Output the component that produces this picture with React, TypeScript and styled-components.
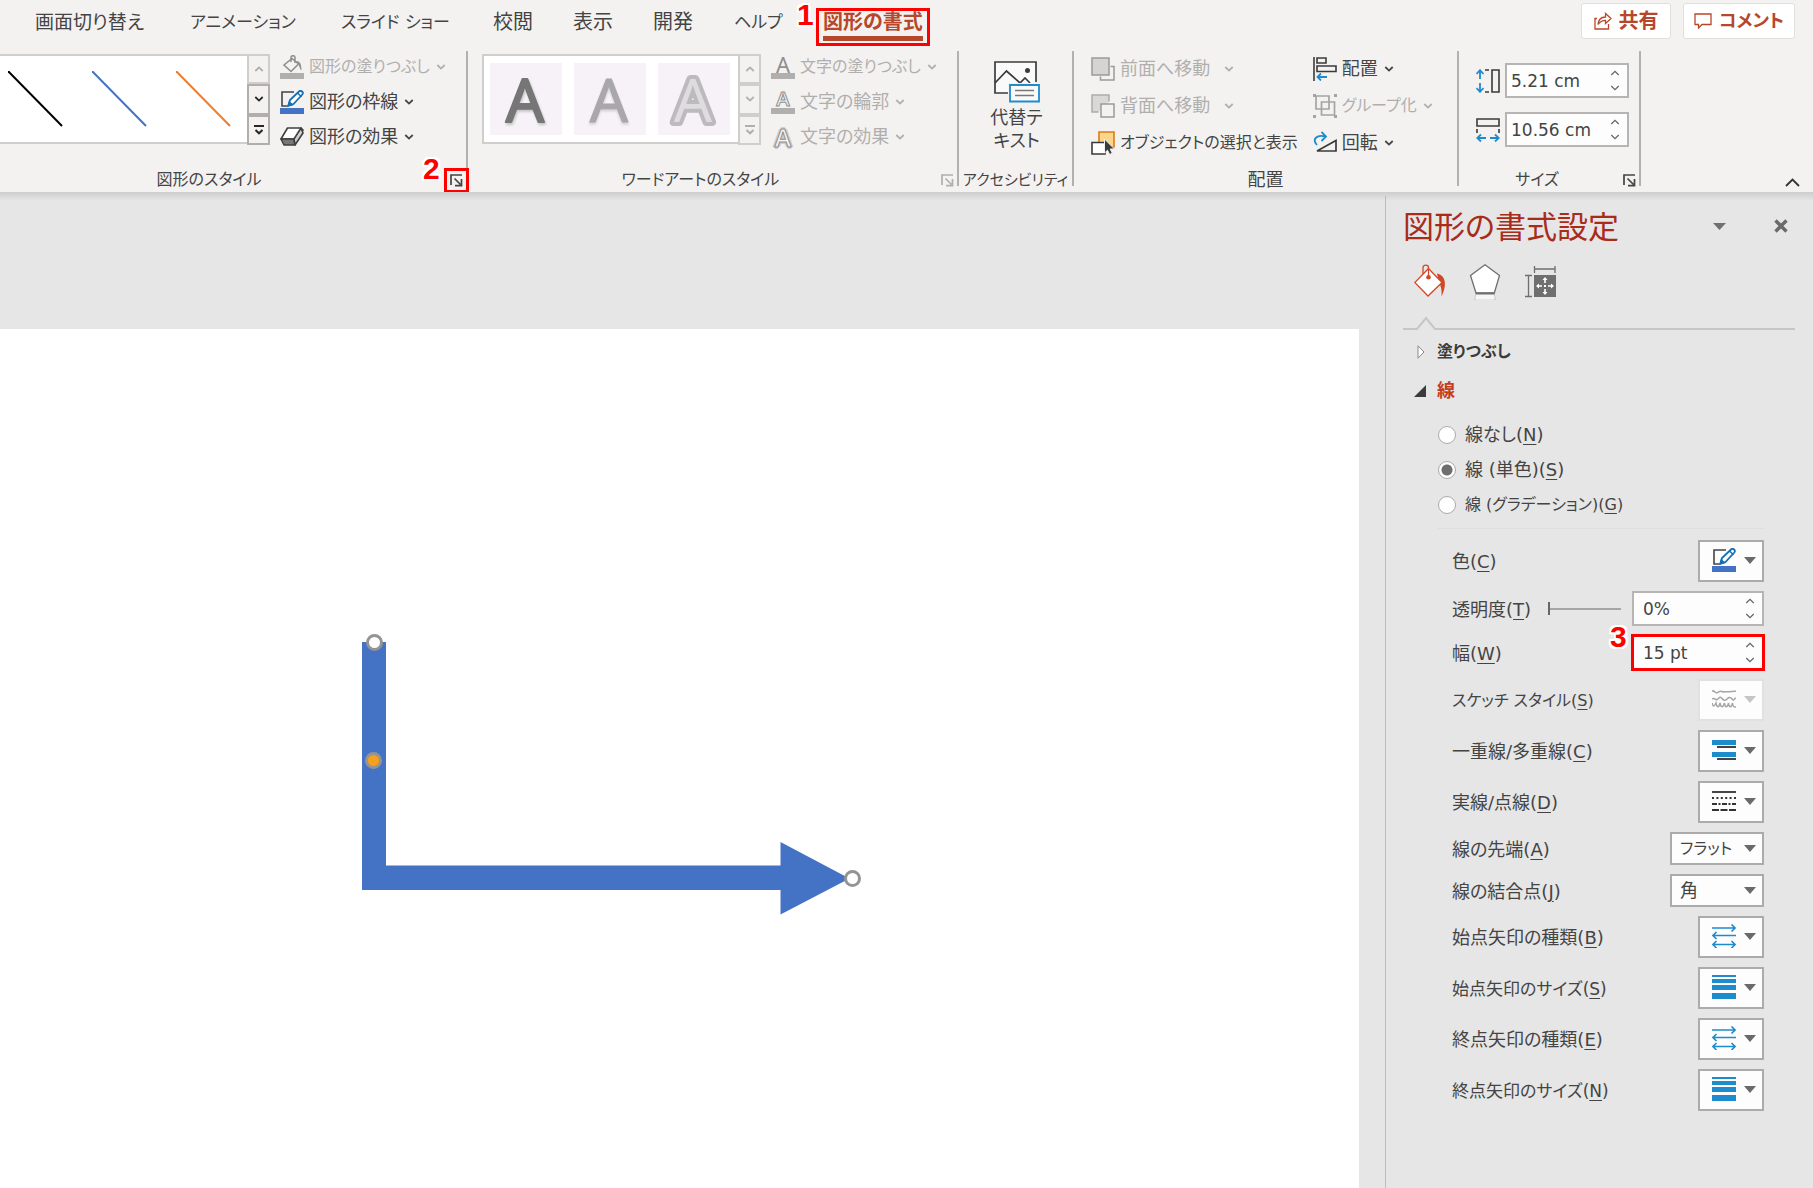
import React from "react";
import styled, { createGlobalStyle, css } from "styled-components";

const INK = "#444444";
const MUTED = "#b1afad";
const ACCENT = "#b7472a";
const BLUE = "#1e8bcd";
const SHAPE = "#4472c4";
const MARK = "#ff0000";

const GlobalStyle = createGlobalStyle`
  *, *::before, *::after { box-sizing: border-box; }
  body {
    margin: 0;
    background: #e6e6e6;
    color: ${INK};
    font-family: "DejaVu Sans", "Noto Sans CJK JP", sans-serif;
    font-size: 18px;
    line-height: 24px;
    font-feature-settings: "palt" 1;
  }
  button, input, select { font: inherit; color: inherit; font-feature-settings: inherit; margin: 0; }
  button { background: none; border: 0; padding: 0; cursor: pointer; }
  svg { display: block; flex: none; }
`;

const Page = styled.div`
  min-height: 100vh;
  display: flex;
  flex-direction: column;
`;

/* ---------- ribbon ---------- */

const Ribbon = styled.header`
  position: relative;
  background: #f3f2f1;
  &::after {
    content: "";
    position: absolute;
    z-index: 1;
    left: 0;
    right: 0;
    top: 100%;
    height: 9px;
    background: linear-gradient(#cdcdcd, #e6e6e6);
  }
`;

const TabBar = styled.div`
  display: flex;
  height: 49px;
  padding: 3px 18px 0 35px;
`;

const Tabs = styled.nav`
  display: flex;
  flex: 1;
`;

const TabSlot = styled.div<{ $width: number }>`
  width: ${(p) => p.$width}px;
  flex: none;
`;

const Tab = styled.button<{ $active?: boolean; $size?: number }>`
  position: relative;
  height: 38px;
  font-size: ${(p) => p.$size ?? 20}px;
  white-space: nowrap;
  ${(p) =>
    p.$active &&
    css`
      color: ${ACCENT};
      font-weight: 700;
      border-bottom: 5px solid ${ACCENT};
      padding-top: 5px;
    `}
`;

const TabMark = styled.span`
  position: absolute;
  inset: 5px -7px -10px;
  border: 3px solid ${MARK};
`;

const StepNumber = styled.span<{ $left: number; $top: number }>`
  position: absolute;
  z-index: 2;
  left: ${(p) => p.$left}px;
  top: ${(p) => p.$top}px;
  color: ${MARK};
  font: 700 30px/30px "Liberation Sans", Arial, sans-serif;
  text-shadow: 2px 0 #fff, -2px 0 #fff, 0 2px #fff, 0 -2px #fff, 2px 2px #fff, -2px -2px #fff, 2px -2px #fff,
    -2px 2px #fff;
`;

const HeaderActions = styled.div`
  display: flex;
  gap: 12px;
`;

const HeaderButton = styled.button<{ $width: number; $size?: number }>`
  display: flex;
  align-items: center;
  justify-content: center;
  gap: 7px;
  width: ${(p) => p.$width}px;
  height: 36px;
  background: #fff;
  border: 1px solid #e1dfdd;
  border-radius: 3px;
  color: ${ACCENT};
  font-size: ${(p) => p.$size ?? 20}px;
  font-weight: 700;
`;

const Groups = styled.div`
  display: flex;
`;

const Group = styled.section<{ $width: number }>`
  width: ${(p) => p.$width}px;
  flex: none;
  display: flex;
  flex-direction: column;
`;

const GroupBody = styled.div<{ $top?: number; $left?: number; $gap?: number }>`
  display: flex;
  height: 117px;
  padding: ${(p) => p.$top ?? 0}px 0 0 ${(p) => p.$left ?? 0}px;
  gap: ${(p) => p.$gap ?? 10}px;
`;

const GroupFooter = styled.div`
  display: flex;
  height: 26px;
  align-items: center;
`;

const GroupName = styled.h2<{ $size?: number; $end?: number }>`
  flex: 1;
  margin: 0;
  padding: 2px ${(p) => p.$end ?? 0}px 0 0;
  font-size: ${(p) => p.$size ?? 16}px;
  font-weight: 400;
  text-align: center;
  white-space: nowrap;
`;

const Launcher = styled.button<{ $off?: boolean }>`
  position: relative;
  display: flex;
  align-items: center;
  justify-content: flex-end;
  width: 24px;
  height: 26px;
  padding: 3px 3px 0 0;
  color: ${(p) => (p.$off ? MUTED : INK)};
`;

const LauncherMark = styled.span`
  position: absolute;
  left: 2px;
  top: 2px;
  width: 25px;
  height: 25px;
  border: 3px solid ${MARK};
`;

const Divider = styled.div`
  width: 2px;
  height: 135px;
  margin-top: 2px;
  background: #b3b1af;
  flex: none;
`;

const Gallery = styled.div`
  display: flex;
  margin-top: 5px;
  height: 91px;
`;

const GalleryItems = styled.div<{ $open?: boolean }>`
  display: flex;
  align-items: center;
  gap: 12px;
  height: 90px;
  background: #fff;
  border: 2px solid #d0cecc;
  border-right: 0;
  ${(p) => (p.$open ? "border-left: 0; width: 247px; padding-left: 0;" : "width: 256px; padding-left: 6px;")}
`;

const StyleTile = styled.button<{ $tint?: boolean }>`
  display: flex;
  align-items: center;
  justify-content: center;
  width: 72px;
  height: 72px;
  background: ${(p) => (p.$tint ? "#f6f2f8" : "transparent")};
`;

type ArtKind = "dark" | "light" | "outline";

const ArtSvg = styled.svg<{ $kind: ArtKind }>`
  overflow: visible;
  text {
    font: 400 60px "Noto Sans", sans-serif;
    text-anchor: middle;
    paint-order: stroke fill;
    stroke-linejoin: round;
    ${(p) =>
      ({
        dark: "fill: #767676; stroke: #767676; stroke-width: 2px; filter: drop-shadow(1px 2px 1px #c4c4c4);",
        light: "fill: #a9a7a9; stroke: #a9a7a9; stroke-width: 1px; filter: drop-shadow(0 2px 1px #cfcfcf);",
        outline: "fill: #dfdcdf; stroke: #bcbabd; stroke-width: 8px;",
      })[p.$kind]}
  }
`;

function ArtLetter({ kind }: { kind: ArtKind }) {
  return (
    <ArtSvg $kind={kind} width="72" height="72" viewBox="0 0 72 72">
      <text x="35" y="59">A</text>
    </ArtSvg>
  );
}

const GalleryScroll = styled.div`
  display: flex;
  flex-direction: column;
  width: 23px;
`;

const ScrollButton = styled.button<{ $off?: boolean }>`
  display: flex;
  align-items: center;
  justify-content: center;
  flex: 1;
  border: 2px solid ${(p) => (p.$off ? "#d0cecc" : "#b1aeac")};
  color: ${(p) => (p.$off ? MUTED : "#262626")};
`;

const Commands = styled.div<{ $pitch: number }>`
  display: grid;
  align-content: start;
  grid-auto-rows: ${(p) => p.$pitch}px;
`;

const Command = styled.button<{ $off?: boolean; $wide?: boolean; $size?: number }>`
  display: flex;
  align-items: center;
  gap: ${(p) => (p.$wide ? 14 : 6)}px;
  color: ${(p) => (p.$off ? MUTED : INK)};
  font-size: ${(p) => p.$size ?? 18}px;
  white-space: nowrap;
`;

const CommandLabel = styled.span`
  display: flex;
  align-items: center;
  gap: 5px;
`;

const BigCommand = styled.button`
  display: flex;
  flex-direction: column;
  align-items: center;
  gap: 3px;
  width: 100%;
  line-height: 23px;
`;

const SizeFields = styled.div`
  display: flex;
  flex-direction: column;
  gap: 14px;
`;

const SizeField = styled.label`
  display: flex;
  align-items: center;
  gap: 5px;
`;

const CollapseRibbon = styled.button`
  margin: auto 13px 5px auto;
`;

/* ---------- form controls ---------- */

const NumberBox = styled.div<{ $width: number; $marked?: boolean; $inset?: number }>`
  position: relative;
  display: flex;
  width: ${(p) => p.$width}px;
  height: 35px;
  background: #fdfdfd;
  border: 2px solid #b7b5b4;
  padding-left: ${(p) => p.$inset ?? 4}px;
  ${(p) => p.$marked && `outline: 3px solid ${MARK}; outline-offset: -2px;`}
`;

const NumberInput = styled.input`
  flex: 1;
  min-width: 0;
  border: 0;
  padding: 0;
  font-size: 17px;
  background: transparent;
  outline: 0;
`;

const Spinner = styled.div`
  display: flex;
  flex-direction: column;
  width: 24px;
`;

const SpinButton = styled.button`
  flex: 1;
  display: flex;
  align-items: center;
  justify-content: center;
  color: #666;
`;

function NumberField(p: { id: string; value: string; width: number; inset?: number; marked?: boolean; children?: React.ReactNode }) {
  return (
    <NumberBox $width={p.width} $inset={p.inset} $marked={p.marked}>
      <NumberInput id={p.id} type="text" defaultValue={p.value} />
      <Spinner>
        <SpinButton aria-label="増やす"><Chevron up thin /></SpinButton>
        <SpinButton aria-label="減らす"><Chevron thin /></SpinButton>
      </Spinner>
      {p.children}
    </NumberBox>
  );
}

/* ---------- workspace ---------- */

const Workspace = styled.div`
  display: flex;
  flex: 1;
`;

const Canvas = styled.main`
  display: flex;
  flex: 1;
  padding: 137px 26px 0 0;
`;

const Slide = styled.div`
  position: relative;
  flex: 1;
  background: #fff;
`;

const Connector = styled.svg`
  position: absolute;
  left: 352px;
  top: 300px;
`;

const Pane = styled.aside`
  position: relative;
  z-index: 2;
  width: 428px;
  margin-top: 4px;
  border-left: 1px solid #bdbdbd;
  padding: 10px 18px 40px 17px;
`;

const PaneHeader = styled.div`
  display: flex;
  align-items: center;
  height: 42px;
`;

const PaneTitle = styled.h1`
  flex: 1;
  margin: 0;
  color: #a92b1a;
  font-size: 31px;
  line-height: 42px;
  font-weight: 400;
`;

const PaneMenu = styled.button`
  margin: 0 48px 2px 0;
`;

const PaneClose = styled.button`
  margin: 0 7px 2px 0;
`;

const PaneTabs = styled.div`
  display: flex;
  align-items: start;
  gap: 23px;
  padding: 16px 0 0 11px;
  height: 68px;
`;

const PaneRule = styled.div`
  display: flex;
  height: 14px;
  &::after {
    content: "";
    flex: 1;
    border-bottom: 2px solid #c6c6c6;
  }
`;

const Section = styled.button<{ $open?: boolean }>`
  display: grid;
  grid-template-columns: 34px auto;
  align-items: center;
  justify-content: start;
  height: 39px;
  font-size: ${(p) => (p.$open ? 18 : 16)}px;
  font-weight: 700;
  text-align: left;
  color: ${(p) => (p.$open ? "#c43e1c" : "#3b3b3b")};
`;

const Sections = styled.div`
  display: flex;
  flex-direction: column;
  padding-top: 2px;
`;

const CaretCell = styled.span`
  display: flex;
  padding-left: 11px;
`;

const RadioList = styled.div`
  display: grid;
  grid-auto-rows: 35px;
  margin: 7px 31px 0 35px;
  padding-bottom: 6px;
  border-bottom: 1px solid #dedede;
`;

const RadioRow = styled.label<{ $size?: number }>`
  display: flex;
  align-items: center;
  gap: 9px;
  font-size: ${(p) => p.$size ?? 18}px;
  u { text-underline-offset: 3px; text-decoration-thickness: 1px; }
`;

const Radio = styled.input`
  appearance: none;
  width: 18px;
  height: 18px;
  margin: 0;
  border: 1px solid #ababab;
  border-radius: 50%;
  background: #fff;
  &:checked { background: radial-gradient(circle, #6e6e6e 0 5px, #fff 6px); }
`;

const Settings = styled.div`
  display: flex;
  flex-direction: column;
  gap: 9px;
  margin: 11px 31px 0 49px;
`;

const Setting = styled.div<{ $height: number }>`
  display: flex;
  align-items: center;
  height: ${(p) => p.$height}px;
`;

const SettingName = styled.label<{ $size?: number }>`
  margin-right: auto;
  padding-top: 2px;
  font-size: ${(p) => p.$size ?? 18}px;
  white-space: nowrap;
  u { text-underline-offset: 3px; text-decoration-thickness: 1px; }
`;

const Picker = styled.button<{ $off?: boolean }>`
  display: flex;
  align-items: center;
  justify-content: space-between;
  width: 66px;
  height: 42px;
  padding: 0 6px 2px 12px;
  background: #fdfdfd;
  border: 2px solid ${(p) => (p.$off ? "#e1e1e1" : "#ababab")};
`;

const SelectBox = styled.div`
  position: relative;
  svg { position: absolute; right: 8px; top: 13px; pointer-events: none; }
`;

const Select = styled.select<{ $size?: number }>`
  appearance: none;
  display: block;
  width: 94px;
  height: 33px;
  padding: 0 24px 0 8px;
  font-size: ${(p) => p.$size ?? 18}px;
  line-height: 28px;
  background: #fdfdfd;
  border: 2px solid #ababab;
  border-radius: 0;
`;

const Slider = styled.input`
  appearance: none;
  width: 73px;
  height: 13px;
  margin: 0 11px 0 0;
  background: linear-gradient(#a6a6a6, #a6a6a6) center / 100% 2px no-repeat;
  &::-webkit-slider-thumb { appearance: none; width: 2px; height: 13px; background: #666; }
`;

/* ---------- icons ---------- */

function Chevron({ up, thin }: { up?: boolean; thin?: boolean }) {
  return (
    <svg width="10" height="6" viewBox="0 0 10 6" fill="none" stroke="currentColor" strokeWidth={thin ? 1.3 : 1.8}>
      <path d={up ? "M1.3 5 5 1.4 8.7 5" : "M1.3 1 5 4.6 8.7 1"} />
    </svg>
  );
}

function MoreChevron() {
  return (
    <svg width="12" height="12" viewBox="0 0 12 12" fill="none" stroke="currentColor" strokeWidth="2">
      <path d="M1 2h10M2.5 6 6 9.3 9.5 6" />
    </svg>
  );
}

function Triangle({ color = "#6a6a6a" }: { color?: string }) {
  return (
    <svg width="12" height="7" viewBox="0 0 12 7"><path d="M0 0h12L6 7z" fill={color} /></svg>
  );
}

function LauncherIcon() {
  return (
    <svg width="13" height="13" viewBox="0 0 13 13" fill="none" stroke="currentColor" strokeWidth="1.7">
      <path d="M1 11V1h11M4.5 4.5l6 6M11.5 5v6.6H5" />
    </svg>
  );
}

function FillIcon() {
  return (
    <svg width="24" height="24" viewBox="0 0 24 24" fill="none">
      <path d="M0 18h24v6H0z" fill="#b1afad" />
      <path d="M12 3.5 4 10l7 6.500 7.500-7.500z" fill="#f3f2f1" stroke="#8f8f8f" strokeWidth="1.6" />
      <path d="M11 7V2.5c0-2.4 4-2.4 4 0V8" stroke="#8f8f8f" strokeWidth="1.5" />
      <path d="M16 6c4-.5 5.500 3 5.500 9.500-1.500-1-2-3.500-3-6.500z" fill="#8f8f8f" />
    </svg>
  );
}

function PenIcon() {
  return (
    <svg width="24" height="24" viewBox="0 0 24 24" fill="none">
      <path d="M0 18h24v6H0z" fill={SHAPE} />
      <path d="M14 2H2v14h5" stroke="#444" strokeWidth="1.6" />
      <path d="M8.500 15.500 10 10 19 1.500c2-1.800 5 .9 3.300 3L13.500 14z" fill="#fff" stroke="#1370b8" strokeWidth="1.8" />
      <path d="m8 16 1.300-4 3 2.700zM17.500 3l4 3.700" fill="#1370b8" stroke="#1370b8" strokeWidth="1.500" />
    </svg>
  );
}

function EffectIcon() {
  return (
    <svg width="24" height="24" viewBox="0 0 24 24" stroke="#3f3f3f" strokeWidth="1.6" strokeLinejoin="round">
      <path d="M1 14 7.500 3H21l2 2-6 9z" fill="#fff" />
      <path d="M1 14h13l1 6H4z" fill="#797775" />
      <path d="M14 14 21 3l2 5-8 12z" fill="#d2d0ce" />
    </svg>
  );
}

const LetterBase = styled.span<{ $kind: "fill" | "line" | "glow" }>`
  width: 24px;
  height: 24px;
  text-align: center;
  font: 400 22px/24px "Noto Sans", sans-serif;
  color: #8f8f8f;
  ${(p) =>
    p.$kind !== "glow" &&
    css`
      line-height: 18px;
      border-bottom: 6px solid #b1afad;
    `}
  ${(p) => p.$kind === "line" && "font-weight: 600; font-size: 20px; color: #f3f2f1; -webkit-text-stroke: 1px #8f8f8f;"}
  ${(p) =>
    p.$kind === "glow" &&
    css`
      font-weight: 600;
      font-size: 25px;
      color: #f3f2f1;
      -webkit-text-stroke: 1px #8f8f8f;
      text-shadow: 2px 0 #cfcdcc, -2px 0 #cfcdcc, 0 2px #cfcdcc, 0 -2px #cfcdcc;
    `}
`;

function LetterIcon({ kind }: { kind: "fill" | "line" | "glow" }) {
  return <LetterBase $kind={kind} aria-hidden>A</LetterBase>;
}

function AltTextIcon() {
  return (
    <svg width="46" height="42" viewBox="0 0 46 42" fill="none" stroke="#3b3b3b" strokeWidth="1.7">
      <path d="M14 32H1V1h41v20" fill="#fafafa" />
      <path d="m1 22 11.500-12L26 22l5-5 5 5" />
      <circle cx="33.500" cy="9.500" r="2.500" fill="#3b3b3b" stroke="none" />
      <path d="M14 22h31v19H14z" fill="#f3f2f1" stroke="none" />
      <path d="M16 24h29v16.500H16z" fill="#fafafa" stroke={BLUE} strokeWidth="1.8" />
      <path d="M21 29.500h19M21 34.500h19" stroke="#777" strokeWidth="1.500" />
    </svg>
  );
}

function ForwardIcon() {
  return (
    <svg width="24" height="24" viewBox="0 0 24 24" fill="none" stroke="#9c9a98" strokeWidth="1.500">
      <path d="M1 1h17v17H1z" fill="#d4d4d4" />
      <path d="M19.500 9.500H23V23H9.500v-3.500" />
    </svg>
  );
}

function BackwardIcon() {
  return (
    <svg width="24" height="24" viewBox="0 0 24 24" fill="none" stroke="#9c9a98" strokeWidth="1.500">
      <path d="M7.500 18H1V1h17v6.500" fill="#d8d8d8" stroke="#adabaa" />
      <path d="M10 10h13v13H10z" fill="#f3f2f1" />
    </svg>
  );
}

function SelectionIcon() {
  return (
    <svg width="24" height="24" viewBox="0 0 24 24" fill="none" stroke="#3b3b3b" strokeWidth="1.6">
      <path d="M8 1h15v15H8z" fill="#f9d68a" stroke="#e07b13" />
      <path d="M1 11.500h13V23H1z" fill="#fff" />
      <path d="M13.500 8v14l3-2.800 2.200 4.300 2.600-1.300-2.100-4.200h4.300z" fill="#3b3b3b" stroke="#f3f2f1" strokeWidth="1" />
    </svg>
  );
}

function AlignIcon() {
  return (
    <svg width="24" height="24" viewBox="0 0 24 24" fill="none" stroke="#3b3b3b" strokeWidth="1.6">
      <path d="M1 0v24M4 1h9v5H4zM4 9h19v5.500H4z" />
      <path d="M14 20H4.500M8 16.500 4.500 20 8 23.500" stroke={BLUE} strokeWidth="1.8" />
    </svg>
  );
}

function GroupIcon() {
  return (
    <svg width="24" height="24" viewBox="0 0 24 24" fill="none" stroke="#a6a4a2" strokeWidth="1.7">
      <path d="M3 2h13v13H3zM8.500 8h13v13h-13z" />
      <path d="M0 0h3v3H0zM21 0h3v3h-3zM0 21h3v3H0zM21 21h3v3h-3z" fill="#a6a4a2" stroke="none" />
    </svg>
  );
}

function RotateIcon() {
  return (
    <svg width="24" height="24" viewBox="0 0 24 24" fill="none">
      <path d="M23 9.500V20H4z" stroke="#3b3b3b" strokeWidth="1.7" />
      <path d="M4 14C-1.500 8 4 3.500 12 5.500M8.500 1l4.500 4.500L8.500 10" stroke={BLUE} strokeWidth="1.8" />
    </svg>
  );
}

function HeightIcon() {
  return (
    <svg width="24" height="24" viewBox="0 0 24 24" fill="none">
      <path d="M4 1v9M.5 5 4 1.200 7.500 5M4 14v9M.5 19 4 22.800 7.500 19" stroke={BLUE} strokeWidth="1.8" />
      <path d="M16 1h7v22h-7zM9 1h4M9 23h4" stroke="#3b3b3b" strokeWidth="1.6" />
    </svg>
  );
}

function WidthIcon() {
  return (
    <svg width="24" height="24" viewBox="0 0 24 24" fill="none">
      <path d="M1 20h9M5 16.500 1.200 20 5 23.500M14 20h9M19 16.500l3.800 3.500-3.800 3.500" stroke={BLUE} strokeWidth="1.8" />
      <path d="M1 1h22v7H1zM1 11v4M23 11v4" stroke="#3b3b3b" strokeWidth="1.6" />
    </svg>
  );
}

function ShareIcon() {
  return (
    <svg width="18" height="18" viewBox="0 0 18 18" fill="none" stroke={ACCENT} strokeWidth="1.300">
      <path d="M3 6.500H1V17h13.500v-5" />
      <path d="M4 12.500c.5-5 3-7.500 7.500-7.500V1.500L17 6.500l-5.500 5V8.300c-3 0-5.500 1-7.500 4.200z" />
    </svg>
  );
}

function CommentIcon() {
  return (
    <svg width="18" height="18" viewBox="0 0 18 18" fill="none" stroke={ACCENT} strokeWidth="1.300">
      <path d="M1 2h16v10.500H8L4.500 16v-3.500H1z" />
    </svg>
  );
}

function BucketTabIcon() {
  return (
    <svg width="32" height="36" viewBox="0 0 32 36" fill="none" stroke="#d24726" strokeWidth="1.300">
      <path d="M23 9.500c7.500 1.500 11 9.500 4.500 23 .5-7-.5-10-2.500-14z" fill="#d24726" stroke="none" />
      <path d="M14.500 4.500 28 18.500 14 32 .8 18.500z" fill="#fff" />
      <path d="M9 10V3.500C9 .2 14.500.2 14.500 3.500V13" />
      <circle cx="14.500" cy="13.300" r="2.300" fill="#d24726" stroke="none" />
    </svg>
  );
}

function PentagonTabIcon() {
  return (
    <svg width="32" height="36" viewBox="0 0 32 36" fill="none" stroke="#6f6f6f" strokeWidth="1.300">
      <path d="m7.500 29-1.500 6.500M24.500 29l1.500 6.500" stroke="#a9a9a9" />
      <path d="M7 30h18l1 5H6z" fill="#f6f6f6" stroke="none" />
      <path d="M16 .8 30.500 11.500 25.300 29H7L1.500 11.500z" fill="#fff" />
      <path d="M7 29.500h18.500" strokeWidth="2" />
    </svg>
  );
}

function SizeTabIcon() {
  return (
    <svg width="32" height="36" viewBox="0 0 32 36" fill="none" stroke="#6f6f6f" strokeWidth="1.300">
      <path d="M10.500 2v7M31 2v7M10.500 5H31M1 11.500h7M1 32.500h7M4.500 11.500v21" />
      <path d="M10 11h22v22H10z" fill="#6f6f6f" stroke="none" />
      <path d="M21 14v5M21 25v5M13 22h5M24 22h5" stroke="#fff" strokeWidth="1.600" />
      <path d="m18.500 16 2.500-3 2.500 3zM18.500 28l2.500 3 2.500-3zM15 19.500 12 22l3 2.500zM27 19.500l3 2.500-3 2.500zM20 21h2v2h-2z" fill="#fff" stroke="none" />
    </svg>
  );
}

function SketchIcon() {
  return (
    <svg width="24" height="24" viewBox="0 0 24 24" fill="none" stroke="#a6a6a6" strokeWidth="1.500">
      <path d="M0 4c3-1 3 3 5.500 1.500S8 3.500 10 4.500s4 0 6 .3 5-.8 8-.5" />
      <path d="M0 12c3-2 3 1.500 5 .5s3-4 5-1 4 1.500 5 .5 3-3 5 0 2-1 4-1" />
      <path d="M0 16c1 4 2 4 4 0 1 5 3 5 4 0 1 5 3 5 4.500 0 .5 5 3 5 4 0 .5 5 3 5 4 0 .5 5 2 4 3.500 4" />
    </svg>
  );
}

function CompoundIcon() {
  return (
    <svg width="24" height="24" viewBox="0 0 24 24">
      <path d="M0 2h24v5H0zM0 14h24v5H0z" fill={BLUE} />
      <path d="M5 8h19v2H5zM5 20h19v2H5z" fill="#444" />
    </svg>
  );
}

function DashIcon() {
  return (
    <svg width="24" height="24" viewBox="0 0 24 24" fill="none" stroke="#333" strokeWidth="1.800">
      <path d="M0 3h24" />
      <path d="M0 9h24" strokeDasharray="2 2.400" />
      <path d="M0 15h24" strokeDasharray="5 1.500 2 1.500" />
      <path d="M0 21h24" strokeDasharray="7 1.500" />
    </svg>
  );
}

function ArrowTypeIcon() {
  return (
    <svg width="24" height="24" viewBox="0 0 24 24" fill="none" stroke={BLUE} strokeWidth="1.600">
      <path d="M0 4h23M19.500.5 23 4l-3.500 3.500M24 11.500H1M4.500 8 1 11.500 4.500 15M1 20.500h22M4.500 17 1 20.500 4.500 24M19.500 17l3.500 3.500-3.500 3.500" />
    </svg>
  );
}

function ArrowSizeIcon() {
  return (
    <svg width="24" height="24" viewBox="0 0 24 24" fill={BLUE}>
      <path d="M0 0h24v2H0zM0 4h24v4H0zM0 10h24v5H0zM0 18h24v6H0z" />
    </svg>
  );
}

/* ---------- data ---------- */

const tabs: { name: string; width: number; size?: number }[] = [
  { name: "画面切り替え", width: 155, size: 19 },
  { name: "アニメーション", width: 151, size: 17 },
  { name: "スライド ショー", width: 152, size: 17 },
  { name: "校閲", width: 80 },
  { name: "表示", width: 80 },
  { name: "開発", width: 81 },
  { name: "ヘルプ", width: 89, size: 17 },
];

const lineStyles = ["#000000", "#4472c4", "#ed7d31"];

function ScrollButtons({ off }: { off?: boolean }) {
  return (
    <GalleryScroll>
      <ScrollButton $off aria-label="前の行"><Chevron up /></ScrollButton>
      <ScrollButton $off={off} aria-label="次の行"><Chevron /></ScrollButton>
      <ScrollButton $off={off} aria-label="その他"><MoreChevron /></ScrollButton>
    </GalleryScroll>
  );
}

function MenuCommand(p: { icon: React.ReactNode; label: string; off?: boolean; wide?: boolean; plain?: boolean; size?: number }) {
  return (
    <Command $off={p.off} $wide={p.wide} $size={p.size}>
      <CommandLabel>{p.icon}{p.label}</CommandLabel>
      {!p.plain && <Chevron />}
    </Command>
  );
}

type Row = { id: string; name: string; k: string; icon: React.ReactNode; off?: boolean; size?: number };

const PickerRow = ({ row }: { row: Row }) => (
  <Setting $height={42}>
    <SettingName htmlFor={row.id} $size={row.size}>{row.name}(<u>{row.k}</u>)</SettingName>
    <Picker id={row.id} $off={row.off}>
      {row.icon}
      <Triangle color={row.off ? "#c6c6c6" : undefined} />
    </Picker>
  </Setting>
);

const SelectRow = (p: { id: string; name: string; k: string; value: string; size?: number }) => (
  <Setting $height={33}>
    <SettingName htmlFor={p.id}>{p.name}(<u>{p.k}</u>)</SettingName>
    <SelectBox>
      <Select id={p.id} defaultValue={p.value} $size={p.size}><option>{p.value}</option></Select>
      <Triangle />
    </SelectBox>
  </Setting>
);

const strokeRows: Row[] = [
  { id: "sketch", name: "スケッチ スタイル", k: "S", icon: <SketchIcon />, off: true, size: 16 },
  { id: "compound", name: "一重線/多重線", k: "C", icon: <CompoundIcon /> },
  { id: "dash", name: "実線/点線", k: "D", icon: <DashIcon /> },
];

const arrowRows: Row[] = [
  { id: "beginType", name: "始点矢印の種類", k: "B", icon: <ArrowTypeIcon /> },
  { id: "beginSize", name: "始点矢印のサイズ", k: "S", icon: <ArrowSizeIcon />, size: 17 },
  { id: "endType", name: "終点矢印の種類", k: "E", icon: <ArrowTypeIcon /> },
  { id: "endSize", name: "終点矢印のサイズ", k: "N", icon: <ArrowSizeIcon />, size: 17 },
];

export default function App() {
  return (
    <Page>
      <GlobalStyle />
      <Ribbon>
        <TabBar>
          <Tabs>
            {tabs.map((tab) => (
              <TabSlot key={tab.name} $width={tab.width}><Tab $size={tab.size}>{tab.name}</Tab></TabSlot>
            ))}
            <div>
              <Tab $active>
                図形の書式
                <TabMark />
                <StepNumber $left={-26} $top={-3}>1</StepNumber>
              </Tab>
            </div>
          </Tabs>
          <HeaderActions>
            <HeaderButton $width={90}><ShareIcon />共有</HeaderButton>
            <HeaderButton $width={112} $size={18}><CommentIcon />コメント</HeaderButton>
          </HeaderActions>
        </TabBar>

        <Groups>
          <Group $width={466}>
            <GroupBody>
              <Gallery>
                <GalleryItems $open>
                  {lineStyles.map((color) => (
                    <StyleTile key={color} aria-label="線のスタイル">
                      <svg width="56" height="57" viewBox="0 0 56 57">
                        <path d="M0 0l54 55" stroke={color} strokeWidth="2" />
                      </svg>
                    </StyleTile>
                  ))}
                </GalleryItems>
                <ScrollButtons />
              </Gallery>
              <Commands $pitch={35}>
                <MenuCommand icon={<FillIcon />} label="図形の塗りつぶし" off size={16} />
                <MenuCommand icon={<PenIcon />} label="図形の枠線" />
                <MenuCommand icon={<EffectIcon />} label="図形の効果" />
              </Commands>
            </GroupBody>
            <GroupFooter>
              <GroupName $end={24}>図形のスタイル</GroupName>
              <Launcher aria-label="図形の書式設定">
                <LauncherIcon />
                <LauncherMark />
                <StepNumber $left={-19} $top={-12}>2</StepNumber>
              </Launcher>
            </GroupFooter>
          </Group>
          <Divider />

          <Group $width={489}>
            <GroupBody $left={14}>
              <Gallery>
                <GalleryItems>
                  {(["dark", "light", "outline"] as const).map((kind) => (
                    <StyleTile key={kind} $tint><ArtLetter kind={kind} /></StyleTile>
                  ))}
                </GalleryItems>
                <ScrollButtons off />
              </Gallery>
              <Commands $pitch={35}>
                <MenuCommand icon={<LetterIcon kind="fill" />} label="文字の塗りつぶし" off size={16} />
                <MenuCommand icon={<LetterIcon kind="line" />} label="文字の輪郭" off />
                <MenuCommand icon={<LetterIcon kind="glow" />} label="文字の効果" off />
              </Commands>
            </GroupBody>
            <GroupFooter>
              <GroupName>ワードアートのスタイル</GroupName>
              <Launcher $off aria-label="文字の効果の設定"><LauncherIcon /></Launcher>
            </GroupFooter>
          </Group>
          <Divider />

          <Group $width={113}>
            <GroupBody $top={12} $left={2}>
              <BigCommand>
                <AltTextIcon />
                <span>代替テ<br />キスト</span>
              </BigCommand>
            </GroupBody>
            <GroupFooter><GroupName $size={15}>アクセシビリティ</GroupName></GroupFooter>
          </Group>
          <Divider />

          <Group $width={383}>
            <GroupBody $top={1} $left={17} $gap={15}>
              <Commands $pitch={37}>
                <MenuCommand icon={<ForwardIcon />} label="前面へ移動" off wide />
                <MenuCommand icon={<BackwardIcon />} label="背面へ移動" off wide />
                <MenuCommand icon={<SelectionIcon />} label="オブジェクトの選択と表示" plain size={16} />
              </Commands>
              <Commands $pitch={37}>
                <MenuCommand icon={<AlignIcon />} label="配置" />
                <MenuCommand icon={<GroupIcon />} label="グループ化" off size={16} />
                <MenuCommand icon={<RotateIcon />} label="回転" />
              </Commands>
            </GroupBody>
            <GroupFooter><GroupName $size={18}>配置</GroupName></GroupFooter>
          </Group>
          <Divider />

          <Group $width={180}>
            <GroupBody $top={14} $left={17}>
              <SizeFields>
                <SizeField htmlFor="shapeHeight" aria-label="高さ">
                  <HeightIcon />
                  <NumberField id="shapeHeight" value="5.21 cm" width={124} />
                </SizeField>
                <SizeField htmlFor="shapeWidth" aria-label="幅">
                  <WidthIcon />
                  <NumberField id="shapeWidth" value="10.56 cm" width={124} />
                </SizeField>
              </SizeFields>
            </GroupBody>
            <GroupFooter>
              <GroupName>サイズ</GroupName>
              <Launcher aria-label="サイズの設定"><LauncherIcon /></Launcher>
            </GroupFooter>
          </Group>
          <Divider />
          <CollapseRibbon aria-label="リボンを折りたたむ">
            <svg width="15" height="9" viewBox="0 0 15 9" fill="none" stroke="#333" strokeWidth="1.800">
              <path d="M1 8l6.500-6.500L14 8" />
            </svg>
          </CollapseRibbon>
        </Groups>
      </Ribbon>

      <Workspace>
        <Canvas>
          <Slide>
            <Connector width="520" height="300" viewBox="0 0 520 300">
              <path d="M10 13h24v223.500H428.500v-23.500l69 36.500-69 36v-24.500H10z" fill={SHAPE} />
              <g stroke="#949494" strokeWidth="3">
                <circle cx="22.500" cy="13.500" r="7" fill="#fff" />
                <circle cx="21.500" cy="131.500" r="7" fill="#f5a11c" />
                <circle cx="500.500" cy="249.500" r="7" fill="#fff" />
              </g>
            </Connector>
          </Slide>
        </Canvas>

        <Pane>
          <PaneHeader>
            <PaneTitle>図形の書式設定</PaneTitle>
            <PaneMenu aria-label="作業ウィンドウのオプション">
              <svg width="13" height="7" viewBox="0 0 13 7"><path d="M0 0h13L6.500 7z" fill="#707070" /></svg>
            </PaneMenu>
            <PaneClose aria-label="閉じる">
              <svg width="14" height="14" viewBox="0 0 14 14"><path d="M1.500 1.500l11 11M12.500 1.500l-11 11" stroke="#6a6a6a" strokeWidth="3.400" /></svg>
            </PaneClose>
          </PaneHeader>
          <PaneTabs>
            <button aria-label="塗りつぶしと線"><BucketTabIcon /></button>
            <button aria-label="効果"><PentagonTabIcon /></button>
            <button aria-label="サイズとプロパティ"><SizeTabIcon /></button>
          </PaneTabs>
          <PaneRule>
            <svg width="34" height="14" viewBox="0 0 34 14" fill="none" stroke="#c6c6c6" strokeWidth="2">
              <path d="M0 13h14l9-11 9 11h2" />
            </svg>
          </PaneRule>
          <Sections>
            <Section>
              <CaretCell>
                <svg width="13" height="14" viewBox="0 0 13 14"><path d="M4 .8 10 7l-6 6.200z" fill="#fff" stroke="#8a8a8a" /></svg>
              </CaretCell>
              塗りつぶし
            </Section>
            <Section $open>
              <CaretCell>
                <svg width="12" height="12" viewBox="0 0 12 12"><path d="M12 0v12H0z" fill="#3b3b3b" /></svg>
              </CaretCell>
              線
            </Section>
          </Sections>

          <RadioList>
            <RadioRow><Radio type="radio" name="line" /><span>線なし(<u>N</u>)</span></RadioRow>
            <RadioRow><Radio type="radio" name="line" defaultChecked /><span>線 (単色)(<u>S</u>)</span></RadioRow>
            <RadioRow $size={16}><Radio type="radio" name="line" /><span>線 (グラデーション)(<u>G</u>)</span></RadioRow>
          </RadioList>

          <Settings>
            <PickerRow row={{ id: "color", name: "色", k: "C", icon: <PenIcon /> }} />
            <Setting $height={35}>
              <SettingName htmlFor="opacity">透明度(<u>T</u>)</SettingName>
              <Slider type="range" aria-label="透明度" min="0" max="100" defaultValue="0" />
              <NumberField id="opacity" value="0%" width={132} inset={9} />
            </Setting>
            <Setting $height={35}>
              <SettingName htmlFor="lineWidth">幅(<u>W</u>)</SettingName>
              <NumberField id="lineWidth" value="15 pt" width={132} inset={9} marked>
                <StepNumber $left={-24} $top={-15}>3</StepNumber>
              </NumberField>
            </Setting>
            {strokeRows.map((row) => <PickerRow key={row.id} row={row} />)}
            <SelectRow id="cap" name="線の先端" k="A" value="フラット" size={16} />
            <SelectRow id="join" name="線の結合点" k="J" value="角" />
            {arrowRows.map((row) => <PickerRow key={row.id} row={row} />)}
          </Settings>
        </Pane>
      </Workspace>
    </Page>
  );
}
